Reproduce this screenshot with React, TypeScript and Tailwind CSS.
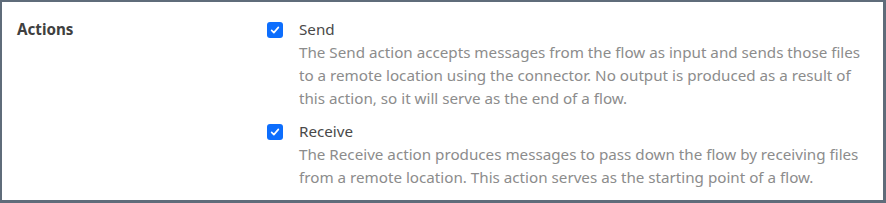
const actions = [
  {
    name: 'Send',
    description:
      'The Send action accepts messages from the flow as input and sends those files to a remote location using the connector. No output is produced as a result of this action, so it will serve as the end of a flow.',
  },
  {
    name: 'Receive',
    description:
      'The Receive action produces messages to pass down the flow by receiving files from a remote location. This action serves as the starting point of a flow.',
  },
];

const CheckBox = () => (
  <span className="mt-[4px] flex h-4 w-4 shrink-0 items-center justify-center rounded-[3px] bg-[#0d6efd]">
    <svg viewBox="0 0 16 16" className="h-3 w-3" fill="none">
      <path d="M3.5 8.5l3 3 6-7" stroke="white" strokeWidth="2.2" strokeLinecap="round" strokeLinejoin="round" />
    </svg>
  </span>
);

export default function App() {
  return (
    <div
      className="flex h-[203px] w-[886px] border-t-2 border-l-2 border-r-[3px] border-b-[3px] border-[#5f6c7a] bg-white pt-[16px] text-[15.2px] leading-[23px]"
      style={{ fontFamily: '"Noto Sans", "Open Sans", sans-serif' }}
    >
      <div className="w-[250px] shrink-0 pl-[15px] font-bold text-[#404040]">Actions</div>
      <div className="flex flex-col gap-[10px] pl-[15px] pr-[16px]">
        {actions.map((a) => (
          <div key={a.name} className="flex gap-4">
            <CheckBox />
            <div>
              <div className="text-[#494949]">{a.name}</div>
              <div className="text-[#8c8c8c]">{a.description}</div>
            </div>
          </div>
        ))}
      </div>
    </div>
  );
}
